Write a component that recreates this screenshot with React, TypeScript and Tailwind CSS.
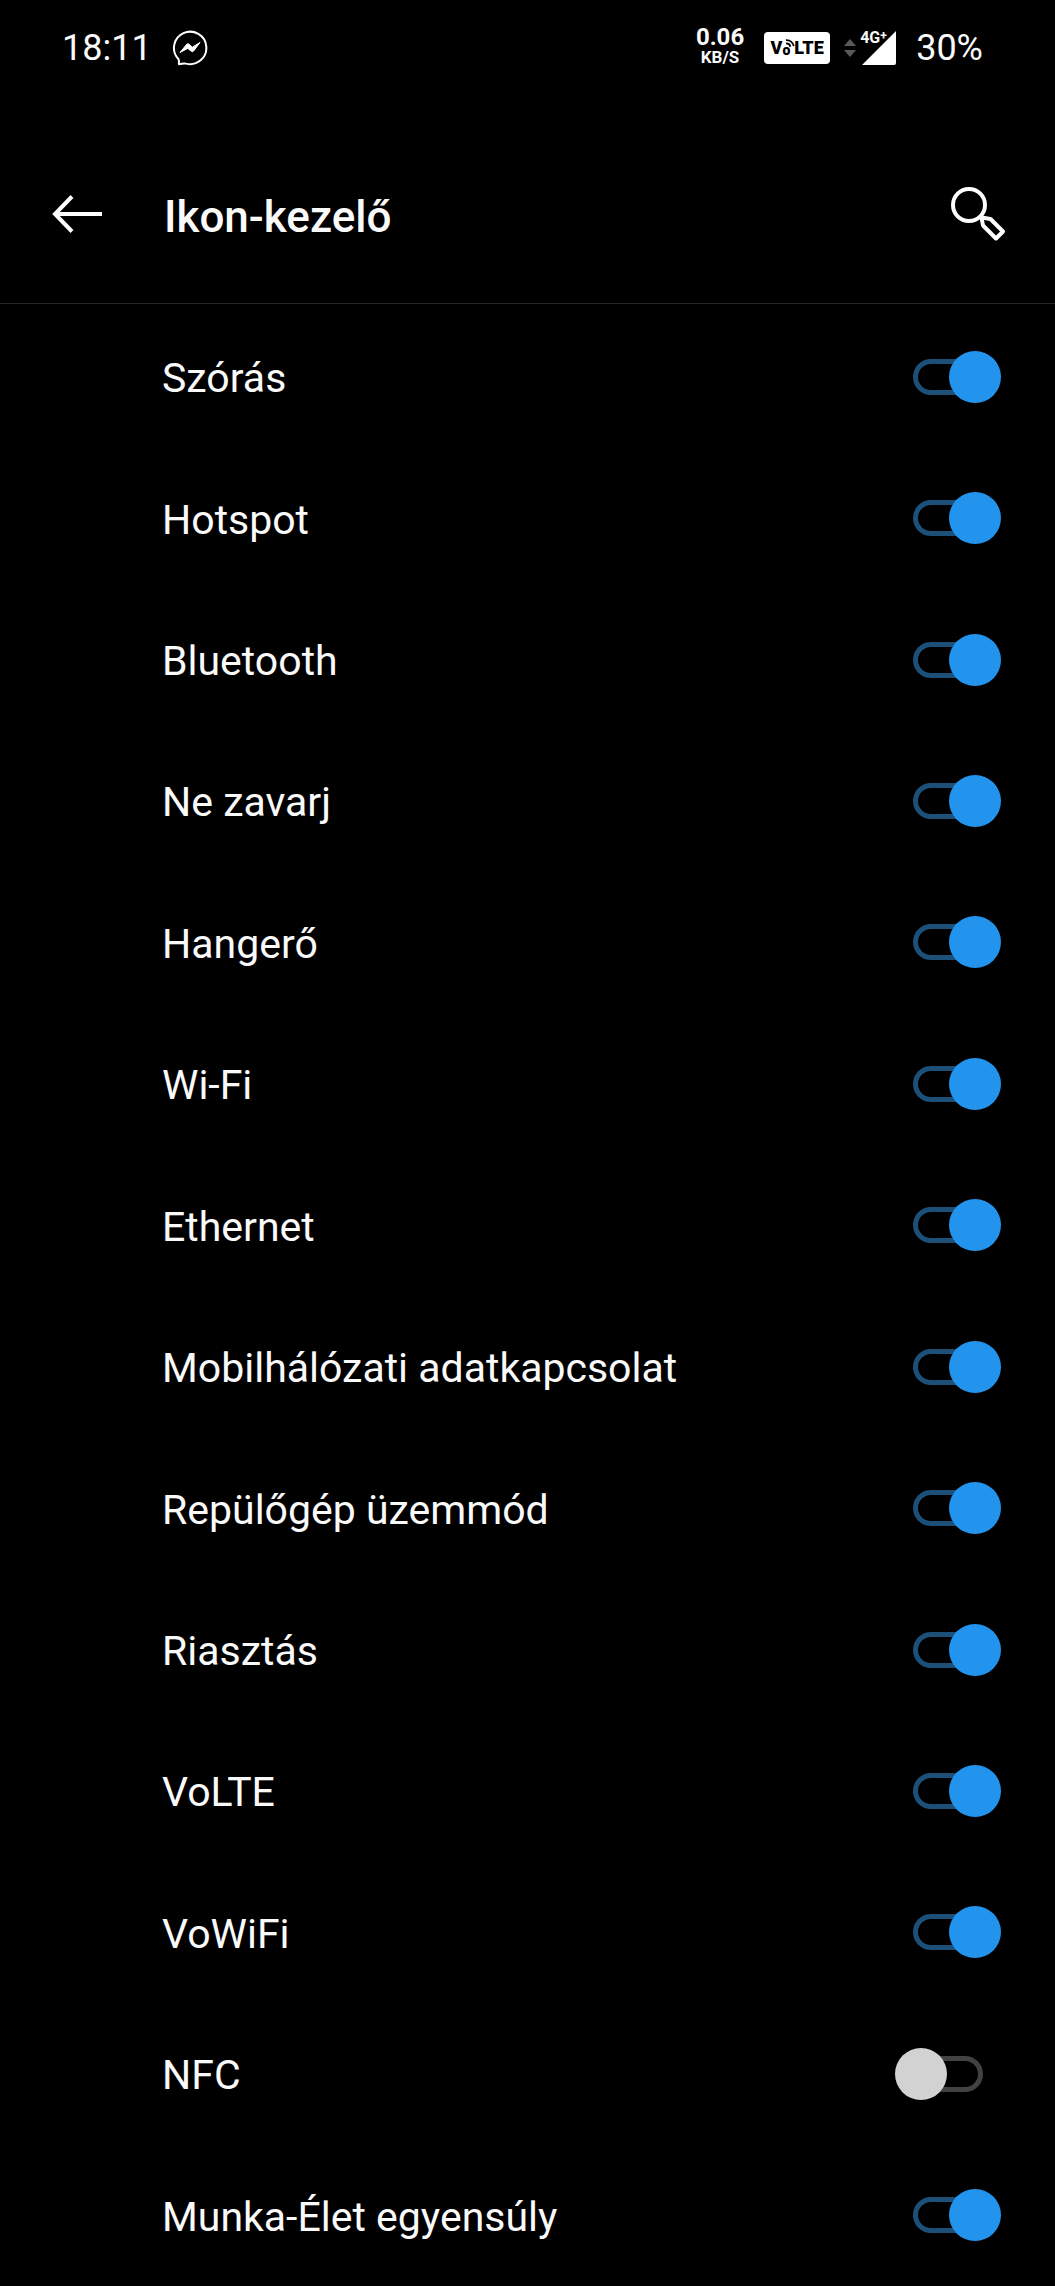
import { useState } from "react";

interface StatusIcon {
  id: string;
  label: string;
  enabled: boolean;
}

const initialIcons: StatusIcon[] = [
  { id: "cast", label: "Szórás", enabled: true },
  { id: "hotspot", label: "Hotspot", enabled: true },
  { id: "bluetooth", label: "Bluetooth", enabled: true },
  { id: "dnd", label: "Ne zavarj", enabled: true },
  { id: "volume", label: "Hangerő", enabled: true },
  { id: "wifi", label: "Wi-Fi", enabled: true },
  { id: "ethernet", label: "Ethernet", enabled: true },
  { id: "mobile-data", label: "Mobilhálózati adatkapcsolat", enabled: true },
  { id: "airplane", label: "Repülőgép üzemmód", enabled: true },
  { id: "alarm", label: "Riasztás", enabled: true },
  { id: "volte", label: "VoLTE", enabled: true },
  { id: "vowifi", label: "VoWiFi", enabled: true },
  { id: "nfc", label: "NFC", enabled: false },
  { id: "work-life", label: "Munka-Élet egyensúly", enabled: true },
];

function MessengerIcon() {
  return (
    <svg width="36" height="36" viewBox="0 0 36 36" fill="none">
      <path
        d="M6.5 29.2A16.2 16.2 0 1 1 14 33.6C11.5 32.8 9.5 34.2 7 34.2C6.6 32.5 7.4 31 6.5 29.2Z"
        stroke="white"
        strokeWidth="2"
        strokeLinejoin="round"
      />
      <path
        d="M8 22.5L14.8 14.2Q15.8 13.2 17 14.2L20.3 17.2L28 12.5L21.6 21Q20.6 22.3 19.3 21.2L15.8 18.4Z"
        fill="white"
        stroke="white"
        strokeLinejoin="round"
      />
    </svg>
  );
}

function VolteBadge() {
  return (
    <div className="flex h-8 w-[66px] items-center justify-center rounded-sm bg-white text-lg leading-none font-black text-black">
      <span>V</span>
      <span className="relative mr-1 pt-1 text-sm leading-none">
        o
        <svg
          className="absolute top-0 left-1"
          width="9"
          height="9"
          viewBox="0 0 10 10"
          fill="none"
          stroke="black"
          strokeWidth="2"
        >
          <path d="M0 1.2A8 8 0 0 1 8.6 8" />
          <path d="M0 4.8A4.5 4.5 0 0 1 4.8 8.6" />
        </svg>
      </span>
      <span>LTE</span>
    </div>
  );
}

function SignalIcon() {
  return (
    <div className="flex items-center gap-1">
      <svg width="12" height="18" viewBox="0 0 12 18" fill="#5a5a5a">
        <path d="M6 0L12 7H0Z" />
        <path d="M6 18L0 11H12Z" />
      </svg>
      <div className="relative">
        <svg width="38" height="36" viewBox="0 0 38 36" fill="white">
          <path d="M36 1V33Q36 35 34 35H2Z" />
        </svg>
        <span className="absolute top-0 left-0 flex text-base leading-none font-bold">
          4G<sup className="top-0 text-xs leading-none">+</sup>
        </span>
      </div>
    </div>
  );
}

function StatusBar() {
  return (
    <div className="flex h-24 items-center justify-between pr-[72px] pl-[62px] text-4xl leading-none">
      <div className="flex items-center gap-5">
        <time>18:11</time>
        <MessengerIcon />
      </div>
      <div className="flex items-center">
        <div className="mr-5 flex flex-col items-center pb-1.5 font-bold">
          <span className="text-2xl leading-6">0.06</span>
          <span className="text-[17px] leading-4">KB/S</span>
        </div>
        <VolteBadge />
        <div className="mr-[18px] ml-3.5">
          <SignalIcon />
        </div>
        <span>30%</span>
      </div>
    </div>
  );
}

function Header() {
  return (
    <header className="flex h-52 items-center border-b border-[#262626] pt-7 pr-12 pl-[52px]">
      <button aria-label="Vissza" className="mr-[62px]">
        <svg width="50" height="38" viewBox="0 0 50 38" fill="none">
          <path
            d="M50 19H3M20 1.5L3 19L20 36.5"
            stroke="white"
            strokeWidth="4"
          />
        </svg>
      </button>
      <h1 className="flex-1 pt-1.5 text-[44px] leading-none font-medium">
        Ikon-kezelő
      </h1>
      <button aria-label="Keresés">
        <svg
          width="56"
          height="56"
          viewBox="0 0 56 56"
          fill="none"
          stroke="white"
          strokeWidth="4"
        >
          <circle cx="18" cy="19" r="16" />
          <path
            d="M30.5 31.5L39.5 33L52 45.5L45 52.5L32 39.5Z"
            strokeLinejoin="round"
          />
        </svg>
      </button>
    </header>
  );
}

interface IconRowProps {
  icon: StatusIcon;
  onToggle: () => void;
}

function IconRow({ icon, onToggle }: IconRowProps) {
  return (
    <li className="flex min-h-24 flex-1 items-center justify-between pr-[54px] pl-[162px]">
      <label htmlFor={icon.id} className="flex-1 pt-1 text-[41px] leading-none">
        {icon.label}
      </label>
      {/* before = track, after = thumb */}
      <input
        id={icon.id}
        type="checkbox"
        role="switch"
        checked={icon.enabled}
        onChange={onToggle}
        className="relative h-[52px] w-[106px] shrink-0 appearance-none before:absolute before:inset-x-[18px] before:inset-y-2 before:rounded-full before:border-5 before:border-[#424242] after:absolute after:top-0 after:left-0 after:size-[52px] after:rounded-full after:bg-[#d2d2d2] checked:before:border-[#1c5079] checked:after:left-[54px] checked:after:bg-[#2294ee]"
      />
    </li>
  );
}

export default function App() {
  const [icons, setIcons] = useState(initialIcons);

  const toggleIcon = (id: string) => {
    setIcons((prev) =>
      prev.map((icon) =>
        icon.id === id ? { ...icon, enabled: !icon.enabled } : icon,
      ),
    );
  };

  return (
    <div className="flex min-h-screen flex-col bg-black font-['Roboto',sans-serif] text-[#fafafa]">
      <StatusBar />
      <Header />
      <ul className="flex flex-1 flex-col pt-0.5">
        {icons.map((icon) => (
          <IconRow
            key={icon.id}
            icon={icon}
            onToggle={() => toggleIcon(icon.id)}
          />
        ))}
      </ul>
    </div>
  );
}
